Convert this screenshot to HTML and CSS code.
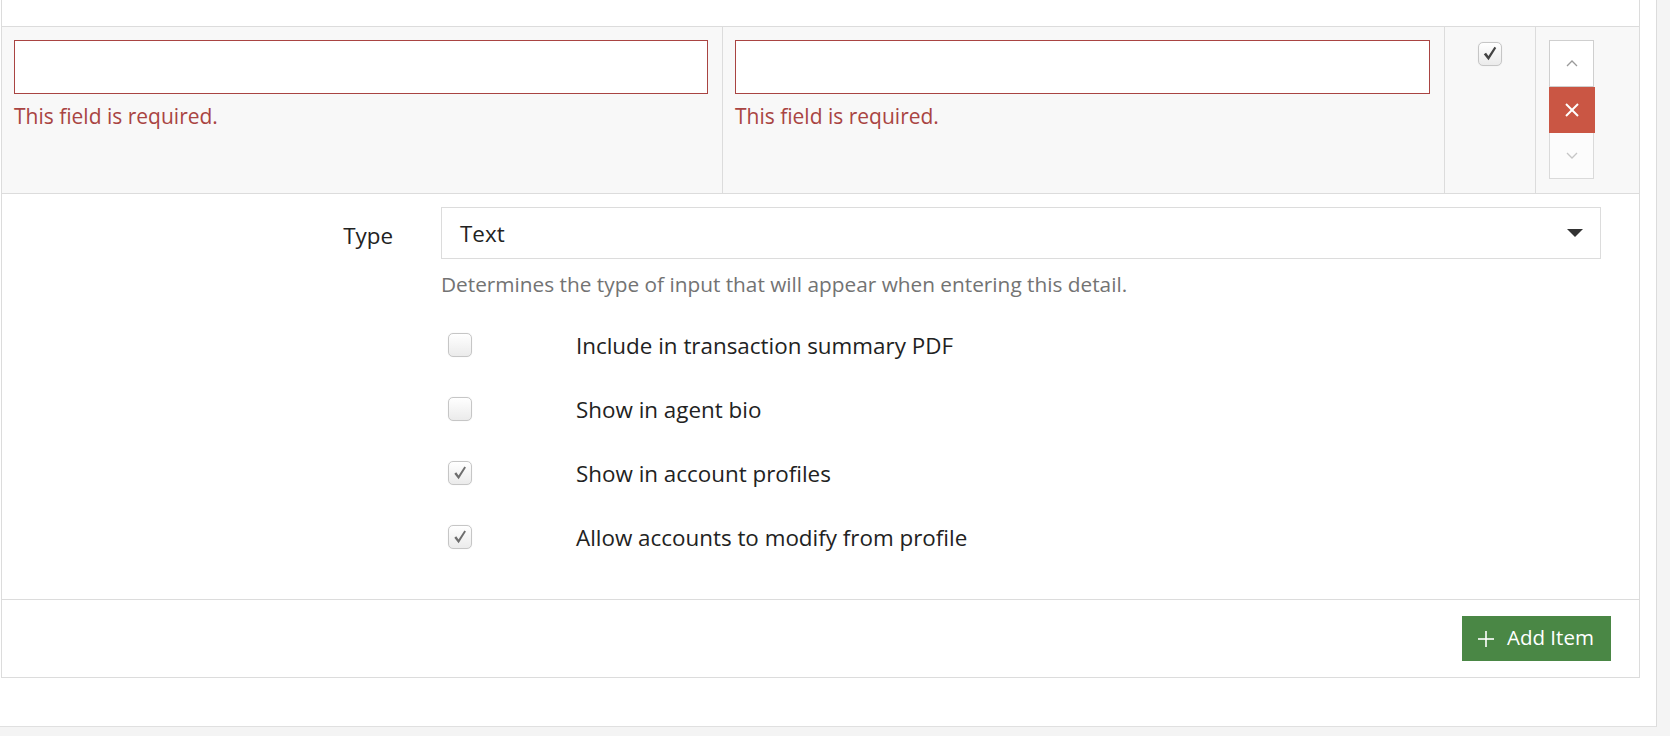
FILE: index.html
```html
<!DOCTYPE html>
<html lang="en">
<head>
<meta charset="utf-8">
<title>Custom detail</title>
<link rel="stylesheet" href="styles.css">
</head>
<body>
<div class="page">
  <div class="panel">
    <div class="panel-top"></div>
    <div class="item-row">
      <div class="cell">
        <input class="field-input" type="text">
        <div class="error">This field is required.</div>
      </div>
      <div class="cell">
        <input class="field-input" type="text">
        <div class="error">This field is required.</div>
      </div>
      <div class="cell cell-check">
        <span class="cb cb-dark"><svg viewBox="0 0 24 24" width="22" height="22"><path d="M5.2 12.4l2.5-1.8 2.6 3.7 6.6-10.2 1.9 1.3-8.4 13.4z"/></svg></span>
      </div>
      <div class="cell cell-order">
        <div class="reorder">
          <div class="btn-up"><svg width="12" height="7" viewBox="0 0 12 7"><polyline points="1,6 6,1 11,6"/></svg></div>
          <div class="btn-remove"><svg width="14" height="14" viewBox="0 0 14 14"><line x1="1" y1="1" x2="13" y2="13"/><line x1="13" y1="1" x2="1" y2="13"/></svg></div>
          <div class="btn-down"><svg width="12" height="7" viewBox="0 0 12 7"><polyline points="1,1 6,6 11,1"/></svg></div>
        </div>
      </div>
    </div>

    <div class="details">
      <div class="form-group">
        <div class="form-label">Type</div>
        <div class="select">
          <span>Text</span>
          <svg class="caret" width="16" height="8" viewBox="0 0 16 8"><path d="M0 0h16L8 8z"/></svg>
        </div>
        <div class="help">Determines the type of input that will appear when entering this detail.</div>
        <div class="options">
          <div class="option">
            <span class="cb"></span>
            <span class="option-label">Include in transaction summary PDF</span>
          </div>
          <div class="option">
            <span class="cb"></span>
            <span class="option-label">Show in agent bio</span>
          </div>
          <div class="option">
            <span class="cb"><svg viewBox="0 0 24 24" width="22" height="22"><path d="M5.8 12.7l2.1-1.5 2.5 3.5 6.4-9.8 1.7 1.1-8 12.9z"/></svg></span>
            <span class="option-label">Show in account profiles</span>
          </div>
          <div class="option">
            <span class="cb"><svg viewBox="0 0 24 24" width="22" height="22"><path d="M5.8 12.7l2.1-1.5 2.5 3.5 6.4-9.8 1.7 1.1-8 12.9z"/></svg></span>
            <span class="option-label">Allow accounts to modify from profile</span>
          </div>
        </div>
      </div>
    </div>

    <div class="panel-footer">
      <button class="btn-add" type="button"><svg width="16" height="16" viewBox="0 0 16 16"><line x1="8" y1="0" x2="8" y2="16"/><line x1="0" y1="8" x2="16" y2="8"/></svg><span>Add Item</span></button>
    </div>
  </div>
</div>
</body>
</html>
```
FILE: styles.css
```css
html {
  background: #f4f4f4;
}

body {
  margin: 0;
  font-family: "Open Sans", "Noto Sans", sans-serif;
  color: #222;
}

.page {
  width: 1656px;
  height: 726px;
  background: #fff;
  border-right: 1px solid #dcdcdc;
  border-bottom: 1px solid #e0e0e0;
}

.panel {
  margin-left: 1px;
  width: 1639px;
  box-sizing: border-box;
  border: 1px solid #dcdcdc;
  border-top: 0;
}

.panel-top {
  height: 26px;
}

/* item row */
.item-row {
  display: grid;
  grid-template-columns: 721px 722px 91px 1fr;
  background: #f8f8f8;
  border-top: 1px solid #dcdcdc;
  border-bottom: 1px solid #dcdcdc;
}

.cell {
  box-sizing: border-box;
  height: 166px;
  padding: 13px 14px 0 12px;
  border-right: 1px solid #dcdcdc;
}

.cell:last-child {
  border-right: 0;
}

.field-input {
  display: block;
  width: 100%;
  height: 54px;
  box-sizing: border-box;
  margin: 0;
  border: 1px solid #a94442;
  background: #fff;
  outline: none;
}

.error {
  margin-top: 8px;
  font-size: 21px;
  line-height: 28px;
  color: #a94442;
}

.cell-check {
  display: flex;
  justify-content: center;
  align-items: flex-start;
  padding: 15px 0 0;
}

.cell-order {
  padding: 13px 0 0 13px;
}

.reorder {
  display: flex;
  flex-direction: column;
  width: 46px;
}

.btn-up,
.btn-down,
.btn-remove {
  display: flex;
  align-items: center;
  justify-content: center;
  box-sizing: border-box;
}

.btn-up {
  width: 45px;
  height: 47px;
  border: 1px solid #cfcfcf;
  background: #fff;
}

.btn-up polyline {
  fill: none;
  stroke: #9a9a9a;
  stroke-width: 1.3;
}

.btn-remove {
  width: 46px;
  height: 46px;
  background: #ca5644;
}

.btn-remove line {
  stroke: #fff;
  stroke-width: 2;
}

.btn-down {
  width: 45px;
  height: 46px;
  border: 1px solid #dadada;
  border-top: 0;
  background: #fcfcfc;
}

.btn-down polyline {
  fill: none;
  stroke: #c6c6c6;
  stroke-width: 1.3;
}

/* checkbox look */
.cb {
  display: inline-flex;
  align-items: center;
  justify-content: center;
  flex: none;
  width: 24px;
  height: 24px;
  box-sizing: border-box;
  border: 1px solid #c6c6c6;
  border-radius: 5px;
  background: linear-gradient(#ffffff, #ebebeb);
  box-shadow: 0 0 1px rgba(0, 0, 0, 0.12);
}

.cb svg path {
  fill: #6e6e6e;
}

.cb-dark svg path {
  fill: #444;
}

/* details */
.details {
  padding: 13px 0 30px;
}

.form-group {
  display: grid;
  grid-template-columns: 439px 1160px;
}

.form-label {
  box-sizing: border-box;
  height: 52px;
  padding: 5px 48px 0 0;
  text-align: right;
  font-size: 22.4px;
  line-height: 47px;
}

.select {
  display: flex;
  align-items: center;
  justify-content: space-between;
  height: 52px;
  box-sizing: border-box;
  padding: 0 17px 0 18px;
  border: 1px solid #dcdcdc;
  font-size: 22.4px;
}

.caret path {
  fill: #333;
}

.help {
  grid-column: 2;
  margin-top: 12px;
  font-size: 20.8px;
  line-height: 26px;
  color: #737373;
}

.options {
  grid-column: 2;
  margin-top: 16px;
}

.option {
  display: flex;
  align-items: center;
  height: 64px;
}

.option .cb {
  margin-left: 7px;
}

.option-label {
  margin-left: 104px;
  font-size: 22.4px;
}

/* footer */
.panel-footer {
  display: flex;
  justify-content: flex-end;
  height: 78px;
  box-sizing: border-box;
  padding: 16px 28px 0 0;
  border-top: 1px solid #dcdcdc;
}

.btn-add {
  display: flex;
  align-items: center;
  gap: 13px;
  height: 45px;
  width: 149px;
  box-sizing: border-box;
  padding: 0 0 3px 16px;
  border: 0;
  background: #4a8745;
  color: #fff;
  font-family: "Open Sans", "Noto Sans", sans-serif;
  font-size: 20.5px;
}

.btn-add svg {
  margin-top: 3px;
}

.btn-add line {
  stroke: #fff;
  stroke-width: 1.6;
}
```
